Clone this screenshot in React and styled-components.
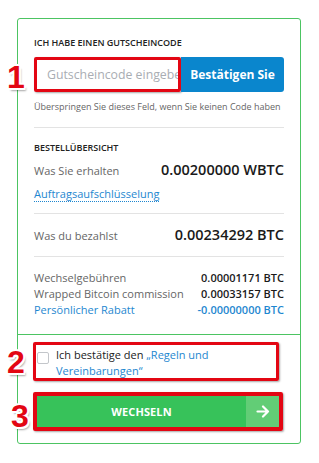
import styled, { createGlobalStyle } from "styled-components";

const GlobalStyle = createGlobalStyle`
  html, body {
    margin: 0;
    padding: 0;
    background: #fff;
    font-family: "Open Sans", "Liberation Sans", sans-serif;
  }
`;

const Page = styled.div`
  width: 319px;
  height: 463px;
  padding: 18px 0 0 17px;
  box-sizing: border-box;
`;

const Card = styled.div`
  position: relative;
  width: 284px;
  box-sizing: border-box;
  border: 1px solid #4cc462;
  border-radius: 3px;
  font-size: 11px;
  line-height: 16px;
`;

const Section = styled.div`
  padding: ${(p) => p.$pad};
`;

const Heading = styled.div`
  font-size: 9px;
  font-weight: 600;
  line-height: 12px;
  color: #222;
  text-transform: uppercase;
  margin-top: ${(p) => p.$mt || 0}px;
`;

const CodeRow = styled.div`
  display: flex;
  height: 35px;
  margin-top: 8px;
`;

const Highlight = styled.div`
  box-sizing: border-box;
  border: ${(p) => p.$w || 3}px solid #e30613;
  border-radius: 2px;
  box-shadow: 1px 1px 2px rgba(0, 0, 0, 0.35);
`;

const InputBox = styled(Highlight)`
  width: 147px;
  height: 35px;
  display: flex;
`;

const CodeInput = styled.input`
  flex: 1;
  min-width: 0;
  border: none;
  outline: none;
  padding: 0 0 0 10px;
  font-family: inherit;
  font-size: 12.3px;
  color: #333;
  background: #fff;
  &::placeholder {
    color: #a9adb3;
  }
`;

const ConfirmButton = styled.button`
  flex: 1;
  border: none;
  border-radius: 0 3px 3px 0;
  background: #0a86cd;
  color: #fff;
  font-family: inherit;
  font-size: 12px;
  font-weight: 700;
  padding: 0;
`;

const Hint = styled.div`
  margin-top: 9px;
  font-size: 9px;
  line-height: 12px;
  color: #666;
  white-space: nowrap;
`;

const Divider = styled.div`
  height: 1px;
  background: #e3e3e3;
  margin: ${(p) => p.$top}px 0 0;
`;

const Row = styled.div`
  display: flex;
  justify-content: space-between;
  align-items: baseline;
  height: ${(p) => p.$lh}px;
  line-height: ${(p) => p.$lh}px;
  margin-top: ${(p) => p.$mt || 0}px;
  white-space: nowrap;
`;

const Label = styled.span`
  font-size: 11px;
  color: ${(p) => (p.$blue ? "#1e87d0" : "#666")};
`;

const BigValue = styled.span`
  font-size: 14.5px;
  font-weight: 600;
  color: #1a1a1a;
`;

const Value = styled.span`
  font-size: 11px;
  font-weight: 600;
  color: ${(p) => (p.$blue ? "#1e87d0" : "#1a1a1a")};
`;

const BreakdownLink = styled.a`
  display: block;
  width: fit-content;
  margin-top: 6px;
  font-size: 11px;
  line-height: 15px;
  color: #1e87d0;
  text-decoration: none;
  border-bottom: 1px dotted #1e87d0;
`;

const GreenDivider = styled.div`
  height: 1px;
  margin-top: 16px;
  background: #4cc462;
`;

const AgreeBox = styled(Highlight)`
  display: flex;
  align-items: flex-start;
  gap: 7px;
  width: 246px;
  height: 39px;
  padding: 2px 0 0 1px;
`;

const CheckBox = styled.span`
  flex: none;
  width: 10px;
  height: 10px;
  margin-top: 5px;
  border: 1px solid #c3c6ca;
  border-radius: 2px;
  background: #fff;
`;

const AgreeText = styled.div`
  width: 200px;
  font-size: 11px;
  line-height: 16px;
  color: #222;
`;

const Link = styled.span`
  color: #1e87d0;
`;

const ExchangeBox = styled(Highlight)`
  width: 250px;
  height: 39px;
  margin-top: 11px;
  display: flex;
`;

const ExchangeButton = styled.div`
  flex: 1;
  display: flex;
  align-items: center;
  justify-content: center;
  background: #37c25a;
  color: #fff;
  font-size: 11px;
  font-weight: 700;
  letter-spacing: 0.1px;
`;

const ArrowPart = styled.div`
  width: 33px;
  display: flex;
  align-items: center;
  justify-content: center;
  background: #62cd76;
`;

const Marker = styled.div`
  position: absolute;
  left: ${(p) => p.$x}px;
  top: ${(p) => p.$y}px;
  font-family: "Liberation Sans", Arial, sans-serif;
  font-size: 32px;
  font-weight: 700;
  line-height: 32px;
  color: #e30613;
  text-shadow: -2px 0 #fff, 2px 0 #fff, 0 -2px #fff, 0 2px #fff,
    -1.5px -1.5px #fff, 1.5px 1.5px #fff, -1.5px 1.5px #fff, 1.5px -1.5px #fff,
    2px 3px 2px rgba(0, 0, 0, 0.35);
`;

function Arrow() {
  return (
    <svg width="14" height="13" viewBox="0 0 14 13" fill="none">
      <path d="M1.5 6.5H12M7 1.5l5 5-5 5" stroke="#fff" strokeWidth="2.2" strokeLinecap="round" strokeLinejoin="round" />
    </svg>
  );
}

export default function App() {
  return (
    <Page>
      <GlobalStyle />
      <Card>
        <Section $pad="18px 16px 0">
          <Heading>Ich habe einen Gutscheincode</Heading>
          <CodeRow>
            <InputBox>
              <CodeInput placeholder="Gutscheincode eingeben" />
            </InputBox>
            <ConfirmButton>Bestätigen Sie</ConfirmButton>
          </CodeRow>
          <Hint>Überspringen Sie dieses Feld, wenn Sie keinen Code haben</Hint>
          <Divider $top={14} />

          <Heading $mt={14}>Bestellübersicht</Heading>
          <Row $lh={20} $mt={6}>
            <Label>Was Sie erhalten</Label>
            <BigValue>0.00200000 WBTC</BigValue>
          </Row>
          <BreakdownLink>Auftragsaufschlüsselung</BreakdownLink>
          <Divider $top={11} />

          <Row $lh={20} $mt={11}>
            <Label>Was du bezahlst</Label>
            <BigValue>0.00234292 BTC</BigValue>
          </Row>
          <Divider $top={11} />

          <Row $lh={16} $mt={13}>
            <Label>Wechselgebühren</Label>
            <Value>0.00001171 BTC</Value>
          </Row>
          <Row $lh={16}>
            <Label>Wrapped Bitcoin commission</Label>
            <Value>0.00033157 BTC</Value>
          </Row>
          <Row $lh={16}>
            <Label $blue>Persönlicher Rabatt</Label>
            <Value $blue>-0.00000000 BTC</Value>
          </Row>
        </Section>
        <GreenDivider />
        <Section $pad="7px 0 12px 15px">
          <AgreeBox>
            <CheckBox />
            <AgreeText>
              Ich bestätige den <Link>„Regeln und Vereinbarungen“</Link>
            </AgreeText>
          </AgreeBox>
          <ExchangeBox $w={4}>
            <ExchangeButton>WECHSELN</ExchangeButton>
            <ArrowPart>
              <Arrow />
            </ArrowPart>
          </ExchangeBox>
        </Section>
        <Marker $x={-11} $y={42}>1</Marker>
        <Marker $x={-11} $y={327}>2</Marker>
        <Marker $x={-7} $y={381}>3</Marker>
      </Card>
    </Page>
  );
}
